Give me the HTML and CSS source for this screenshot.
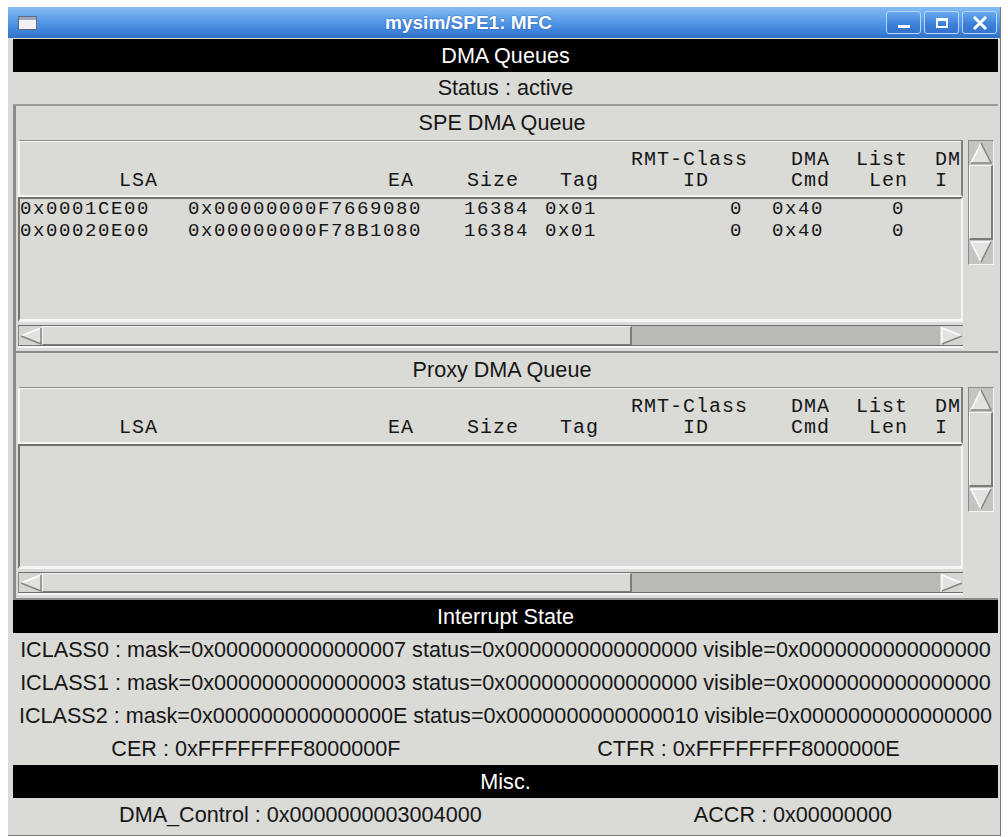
FILE: index.html
```html
<!DOCTYPE html>
<html>
<head>
<meta charset="utf-8">
<title>mysim/SPE1: MFC</title>
<link rel="stylesheet" href="styles.css">
</head>
<body>
<div class="window">
  <div class="titlebar">
    <div class="winicon"><span class="winicon-bar"></span></div>
    <div class="title">mysim/SPE1: MFC</div>
    <div class="tbuttons">
      <div class="tbtn"><span class="g-min"></span></div>
      <div class="tbtn"><span class="g-max"></span></div>
      <div class="tbtn">
        <svg width="14" height="14" viewBox="0 0 14 14"><path d="M2 2 L12 12 M12 2 L2 12" stroke="#fff" stroke-width="3" stroke-linecap="square"/></svg>
      </div>
    </div>
  </div>

  <div class="client">
    <div class="banner">DMA Queues</div>
    <div class="status">Status : active</div>

    <section class="queue">
      <div class="qtitle">SPE DMA Queue</div>
      <div class="qbody">
        <div class="qmain">
          <div class="thead">
            <div class="hc c1"><br>LSA</div>
            <div class="hc c2"><br>EA</div>
            <div class="hc c3"><br>Size</div>
            <div class="hc c4"><br>Tag</div>
            <div class="hc c5">RMT-Class<br>ID   </div>
            <div class="hc c6">DMA<br>Cmd</div>
            <div class="hc c7">List<br>Len</div>
            <div class="hc c8">DM<br>I </div>
          </div>
          <div class="listbox">
            <div class="drow">
              <span class="dc c1">0x0001CE00</span>
              <span class="dc c2">0x00000000F7669080</span>
              <span class="dc c3">16384</span>
              <span class="dc c4">0x01</span>
              <span class="dc c5">0</span>
              <span class="dc c6">0x40</span>
              <span class="dc c7">0</span>
            </div>
            <div class="drow">
              <span class="dc c1">0x00020E00</span>
              <span class="dc c2">0x00000000F78B1080</span>
              <span class="dc c3">16384</span>
              <span class="dc c4">0x01</span>
              <span class="dc c5">0</span>
              <span class="dc c6">0x40</span>
              <span class="dc c7">0</span>
            </div>
          </div>
          <div class="hscroll">
            <div class="arrow">
              <svg width="22" height="18" viewBox="0 0 22 18"><polygon points="1,9 21,1 21,17" fill="#e2e2de"/><path d="M1 9 L21 1" stroke="#fff" stroke-width="1.5"/><path d="M1 9 L21 17 L21 1" stroke="#858582" stroke-width="1.5" fill="none"/></svg>
            </div>
            <div class="hslider"></div>
            <div class="htrough"></div>
            <div class="arrow">
              <svg width="22" height="18" viewBox="0 0 22 18"><polygon points="21,9 1,1 1,17" fill="#e2e2de"/><path d="M1 17 L1 1 L21 9" stroke="#fff" stroke-width="1.5" fill="none"/><path d="M21 9 L1 17" stroke="#858582" stroke-width="1.5"/></svg>
            </div>
          </div>
        </div>
        <div class="vscroll">
          <div class="varrow">
            <svg width="22" height="22" viewBox="0 0 22 22"><polygon points="11,1 21,21 1,21" fill="#e2e2de"/><path d="M1 21 L11 1" stroke="#fff" stroke-width="1.5"/><path d="M11 1 L21 21 L1 21" stroke="#858582" stroke-width="1.5" fill="none"/></svg>
          </div>
          <div class="vslider"></div>
          <div class="varrow">
            <svg width="22" height="22" viewBox="0 0 22 22"><polygon points="11,21 1,1 21,1" fill="#e2e2de"/><path d="M11 21 L1 1 L21 1" stroke="#fff" stroke-width="1.5" fill="none"/><path d="M21 1 L11 21" stroke="#858582" stroke-width="1.5"/></svg>
          </div>
        </div>
      </div>
    </section>

    <section class="queue">
      <div class="qtitle">Proxy DMA Queue</div>
      <div class="qbody">
        <div class="qmain">
          <div class="thead">
            <div class="hc c1"><br>LSA</div>
            <div class="hc c2"><br>EA</div>
            <div class="hc c3"><br>Size</div>
            <div class="hc c4"><br>Tag</div>
            <div class="hc c5">RMT-Class<br>ID   </div>
            <div class="hc c6">DMA<br>Cmd</div>
            <div class="hc c7">List<br>Len</div>
            <div class="hc c8">DM<br>I </div>
          </div>
          <div class="listbox"></div>
          <div class="hscroll">
            <div class="arrow">
              <svg width="22" height="18" viewBox="0 0 22 18"><polygon points="1,9 21,1 21,17" fill="#e2e2de"/><path d="M1 9 L21 1" stroke="#fff" stroke-width="1.5"/><path d="M1 9 L21 17 L21 1" stroke="#858582" stroke-width="1.5" fill="none"/></svg>
            </div>
            <div class="hslider"></div>
            <div class="htrough"></div>
            <div class="arrow">
              <svg width="22" height="18" viewBox="0 0 22 18"><polygon points="21,9 1,1 1,17" fill="#e2e2de"/><path d="M1 17 L1 1 L21 9" stroke="#fff" stroke-width="1.5" fill="none"/><path d="M21 9 L1 17" stroke="#858582" stroke-width="1.5"/></svg>
            </div>
          </div>
        </div>
        <div class="vscroll">
          <div class="varrow">
            <svg width="22" height="22" viewBox="0 0 22 22"><polygon points="11,1 21,21 1,21" fill="#e2e2de"/><path d="M1 21 L11 1" stroke="#fff" stroke-width="1.5"/><path d="M11 1 L21 21 L1 21" stroke="#858582" stroke-width="1.5" fill="none"/></svg>
          </div>
          <div class="vslider"></div>
          <div class="varrow">
            <svg width="22" height="22" viewBox="0 0 22 22"><polygon points="11,21 1,1 21,1" fill="#e2e2de"/><path d="M11 21 L1 1 L21 1" stroke="#fff" stroke-width="1.5" fill="none"/><path d="M21 1 L11 21" stroke="#858582" stroke-width="1.5"/></svg>
          </div>
        </div>
      </div>
    </section>

    <div class="banner">Interrupt State</div>
    <div class="iline">ICLASS0 : mask=0x0000000000000007 status=0x0000000000000000 visible=0x0000000000000000</div>
    <div class="iline">ICLASS1 : mask=0x0000000000000003 status=0x0000000000000000 visible=0x0000000000000000</div>
    <div class="iline">ICLASS2 : mask=0x000000000000000E status=0x0000000000000010 visible=0x0000000000000000</div>
    <div class="pair">
      <span class="cell">CER : 0xFFFFFFFF8000000F</span>
      <span class="cell">CTFR : 0xFFFFFFFF8000000E</span>
    </div>
    <div class="banner">Misc.</div>
    <div class="pair">
      <span class="cell">DMA_Control : 0x0000000003004000</span>
      <span class="cell">ACCR : 0x00000000</span>
    </div>
  </div>
</div>
</body>
</html>
```

FILE: styles.css
```css
html, body {
  margin: 0;
  padding: 0;
  background: #ffffff;
}

body {
  font-family: "Liberation Sans", Arial, sans-serif;
  color: #161616;
}

.window {
  margin: 7px 0 0 8px;
  width: 993px;
  height: 829px;
  display: flex;
  flex-direction: column;
  background: #dadad6;
  box-sizing: border-box;
  border-right: 1px solid #77777a;
  border-bottom: 1px solid #77777a;
}

/* ---------- title bar ---------- */
.titlebar {
  height: 31px;
  flex: none;
  display: flex;
  align-items: center;
  background: linear-gradient(#86bdf5 0%, #5d9ee8 40%, #3f85dc 75%, #2f70c6 100%);
  padding: 0 3px 0 10px;
}

.winicon {
  width: 19px;
  height: 14px;
  border: 1px solid #5a6a80;
  background: #f2f2f2;
  box-sizing: border-box;
  display: flex;
  flex-direction: column;
}

.winicon-bar {
  height: 3px;
  background: #9aa9bd;
}

.title {
  flex: 1;
  text-align: center;
  color: #ffffff;
  font-weight: bold;
  font-size: 19px;
  text-shadow: 0 0 2px #245ba8;
  padding-left: 14px;
}

.tbuttons {
  display: flex;
  gap: 3px;
}

.tbtn {
  width: 35px;
  height: 23px;
  box-sizing: border-box;
  border: 1px solid #b9d6f7;
  border-radius: 3px;
  background: linear-gradient(#6aa8ee, #3b7fd8 60%, #3473cc);
  display: flex;
  align-items: center;
  justify-content: center;
}

.g-min {
  width: 12px;
  height: 3px;
  background: #fff;
  margin-top: 8px;
}

.g-max {
  width: 12px;
  height: 10px;
  box-sizing: border-box;
  border: 2px solid #fff;
  border-top-width: 3px;
}

/* ---------- client area ---------- */
.client {
  flex: 1;
  display: flex;
  flex-direction: column;
  padding: 1px 2px 0 5px;
  font-size: 21.6px;
}

.banner {
  height: 33px;
  flex: none;
  background: #000;
  color: #fff;
  line-height: 33px;
  text-align: center;
}

.status {
  height: 32px;
  line-height: 32px;
  text-align: center;
  border-bottom: 2px solid #9a9a96;
}

/* ---------- queue sections ---------- */
.queue {
  height: 247px;
  flex: none;
  box-sizing: border-box;
  border-left: 3px solid #8a8a87;
  border-bottom: 2px solid #8a8a87;
  display: flex;
  flex-direction: column;
}

.qtitle {
  height: 34px;
  line-height: 34px;
  text-align: center;
  padding-right: 10px;
}

.qbody {
  display: flex;
  padding-left: 2px;
}

.qmain {
  width: 945px;
  display: flex;
  flex-direction: column;
}

.thead {
  display: flex;
  height: 57px;
  box-sizing: border-box;
  border-top: 1px solid #8c8c89;
  border-left: 2px solid #f6f6f4;
  border-bottom: 2px solid #f6f6f4;
  border-right: 2px solid #7e7e7b;
  box-shadow: inset 0 1px 0 #f6f6f4;
  padding-top: 8px;
  font-family: "Liberation Mono", "Courier New", monospace;
  font-size: 20px;
  letter-spacing: 1px;
  line-height: 21px;
  overflow: hidden;
}

.hc {
  flex: none;
  white-space: pre;
  text-align: right;
}

.thead .c1 { width: 138px; }
.thead .c2 { width: 256px; }
.thead .c3 { width: 105px; }
.thead .c4 { width: 80px; }
.thead .c5 { width: 149px; }
.thead .c6 { width: 82px; }
.thead .c7 { width: 78px; }
.thead .c8 { width: 53px; }

.listbox {
  height: 125px;
  flex: none;
  box-sizing: border-box;
  border-top: 2px solid #74746f;
  border-left: 2px solid #74746f;
  border-right: 2px solid #f6f6f4;
  border-bottom: 3px solid #f6f6f4;
  font-family: "Liberation Mono", "Courier New", monospace;
  font-size: 19px;
  letter-spacing: 1.6px;
  line-height: 21.6px;
}

.drow {
  display: flex;
  white-space: pre;
}

.dc {
  flex: none;
  box-sizing: border-box;
}

.drow .c1 { width: 137px; }
.drow .c2 { width: 255px; padding-left: 31px; }
.drow .c3 { width: 105px; padding-left: 52px; }
.drow .c4 { width: 80px; text-align: right; }
.drow .c5 { width: 148px; text-align: right; padding-right: 2px; }
.drow .c6 { width: 82px; padding-left: 27px; }
.drow .c7 { width: 78px; text-align: right; }

/* ---------- scrollbars ---------- */
.hscroll {
  margin-top: 3px;
  height: 21px;
  box-sizing: border-box;
  display: flex;
  background: #b9b9b5;
  border-top: 1px solid #6e6e6a;
  border-bottom: 1px solid #6e6e6a;
  border-left: 1px solid #8a8a87;
  box-shadow: 0 2px 0 #f6f6f4;
}

.arrow {
  width: 23px;
  flex: none;
  display: flex;
  align-items: center;
  justify-content: center;
  background: #d5d5d1;
}

.hslider {
  width: 590px;
  flex: none;
  box-sizing: border-box;
  background: #dadad6;
  border-top: 1px solid #f4f4f2;
  border-left: 1px solid #f4f4f2;
  border-right: 2px solid #7c7c79;
  border-bottom: 1px solid #7c7c79;
}

.htrough {
  flex: 1;
}

.vscroll {
  width: 26px;
  height: 125px;
  margin-left: 5px;
  box-sizing: border-box;
  display: flex;
  flex-direction: column;
  background: #c4c4c0;
  border-left: 1px solid #8a8a87;
  border-top: 1px solid #8a8a87;
  border-right: 1px solid #f4f4f2;
  border-bottom: 1px solid #f4f4f2;
}

.varrow {
  height: 24px;
  flex: none;
  display: flex;
  align-items: center;
  justify-content: center;
}

.vslider {
  flex: 1;
  box-sizing: border-box;
  background: #dadad6;
  border-top: 1px solid #f4f4f2;
  border-left: 1px solid #f4f4f2;
  border-right: 2px solid #7c7c79;
  border-bottom: 2px solid #7c7c79;
}

/* ---------- interrupt + misc ---------- */
.iline {
  height: 33px;
  line-height: 33px;
  text-align: center;
  white-space: nowrap;
}

.pair {
  display: flex;
  height: 33px;
  line-height: 33px;
}

.cell {
  flex: 1 1 auto;
  text-align: center;
  white-space: nowrap;
}
```
